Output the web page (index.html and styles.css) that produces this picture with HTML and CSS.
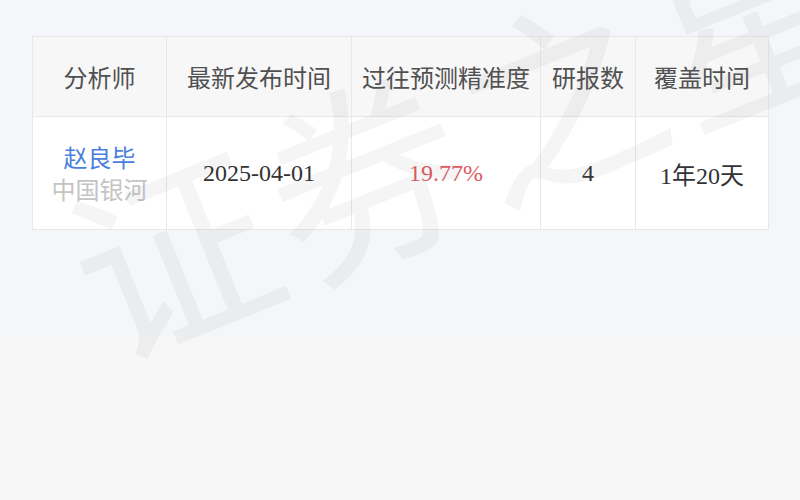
FILE: index.html
```html
<!DOCTYPE html>
<html lang="zh-CN">
<head>
<meta charset="utf-8">
<title>分析师</title>
<link rel="stylesheet" href="styles.css">
</head>
<body>
<div class="page">
  <section class="panel">
    <table class="grid">
      <colgroup>
        <col class="c1"><col class="c2"><col class="c3"><col class="c4"><col class="c5">
      </colgroup>
      <thead>
        <tr>
          <th>分析师</th>
          <th>最新发布时间</th>
          <th>过往预测精准度</th>
          <th>研报数</th>
          <th>覆盖时间</th>
        </tr>
      </thead>
      <tbody>
        <tr>
          <td><div class="name">赵良毕</div><div class="org">中国银河</div></td>
          <td class="num">2025-04-01</td>
          <td class="num red">19.77%</td>
          <td class="num">4</td>
          <td class="num">1年20天</td>
        </tr>
      </tbody>
    </table>
  </section>
  <section class="rest"></section>
  <div class="wm wm1">证券之星</div>
  <div class="wm wm2">证券之星</div>
</div>
</body>
</html>
```

FILE: styles.css
```css
html, body {
  margin: 0;
  padding: 0;
}
body {
  width: 800px;
  height: 500px;
  overflow: hidden;
  font-family: "Noto Sans CJK SC", "Noto Sans", sans-serif;
}
.page {
  position: relative;
  width: 800px;
  height: 500px;
  overflow: hidden;
}
.panel {
  background: #f5f6f9;
  height: 336px;
  padding: 36px 32px 0;
  box-sizing: border-box;
}
.rest {
  background: #f7f7f7;
  height: 164px;
}
.grid {
  width: 736px;
  border-collapse: collapse;
  table-layout: fixed;
  background: #fff;
}
.c1 { width: 134px; }
.c2 { width: 185px; }
.c3 { width: 189px; }
.c4 { width: 95px; }
.c5 { width: 133px; }
.grid th, .grid td {
  border: 1px solid #e8e8e8;
  text-align: center;
  padding: 0;
}
.grid th {
  background: #f7f7f7;
  height: 79px;
  font-weight: normal;
  font-size: 24px;
  color: #505050;
  white-space: nowrap;
  line-height: 1;
}
.grid td {
  height: 112px;
  background: #fff;
  font-size: 24px;
  color: #333;
}
.grid td.num {
  font-family: "Liberation Serif", "Noto Sans CJK SC", serif;
}
.grid td.red {
  color: #e05a64;
}
.name {
  color: #4a7fdc;
  font-size: 24px;
  line-height: 32px;
}
.org {
  color: #c4c4c4;
  font-size: 24px;
  line-height: 32px;
}
.wm {
  position: absolute;
  font-family: "Noto Sans CJK SC", sans-serif;
  font-size: 200px;
  line-height: 1;
  color: rgba(120, 120, 130, 0.07);
  white-space: nowrap;
  transform-origin: 0 0;
  pointer-events: none;
}
.wm1 {
  left: 40px;
  top: 190px;
  transform: rotate(-22deg);
  letter-spacing: 8px;
}
.wm2 {
  left: 580px;
  top: 560px;
  transform: rotate(-22deg);
  letter-spacing: 8px;
}
```
